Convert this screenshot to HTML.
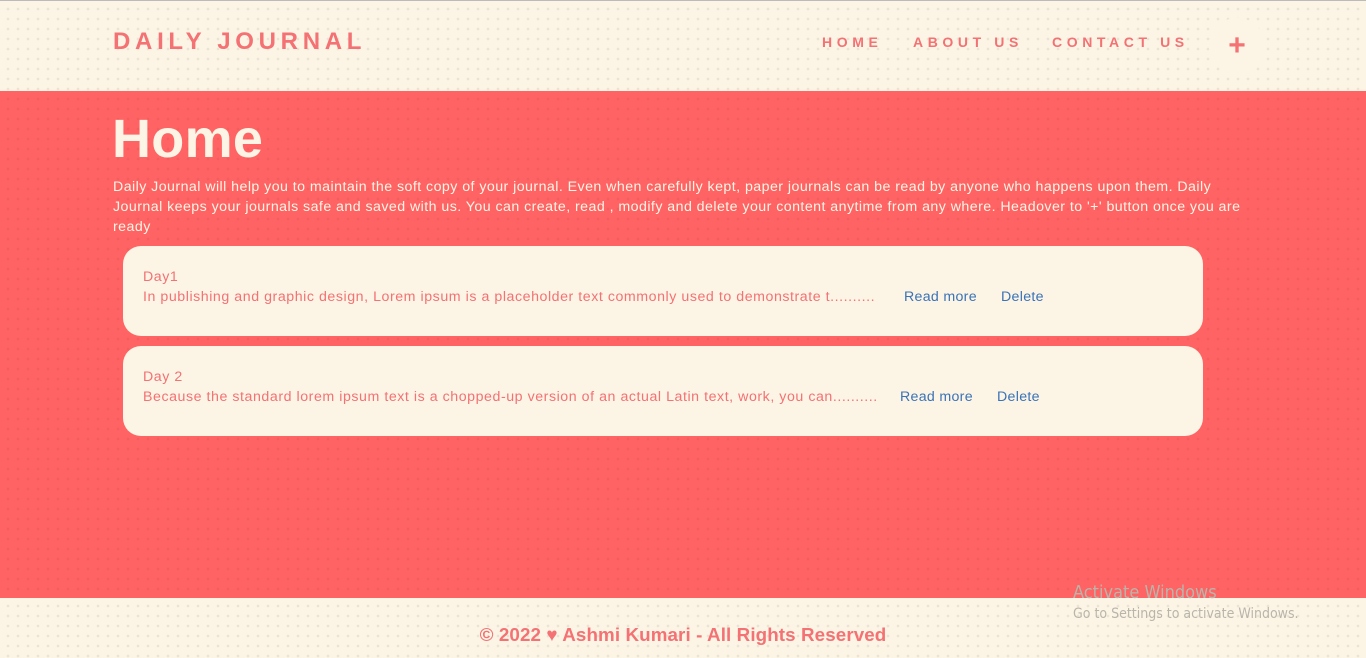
<!DOCTYPE html>
<html><head><meta charset="utf-8"><style>
*{margin:0;padding:0;box-sizing:border-box}
body{width:1366px;height:658px;overflow:hidden;font-family:"Liberation Sans",sans-serif;background:#fcf5e5;position:relative}
.dots{background-image:radial-gradient(circle,rgba(0,0,0,0.07) 1.1px,transparent 1.6px);background-size:10px 10px;background-position:3px 3px}
.top{position:absolute;top:0;left:0;width:1366px;height:91px;background-color:#fcf5e5;border-top:1px solid #bbb}
.logo{position:absolute;left:113px;top:27px;font-size:24px;font-weight:bold;letter-spacing:4.7px;color:#f47174}
.nav{position:absolute;top:33px;font-size:14px;font-weight:bold;letter-spacing:4.6px;color:#f47174}
.plus{position:absolute;left:1209px;top:17px;width:56px;height:56px;border-radius:50%;background:#fcf5e5;color:#f47174;font-size:30px;font-weight:bold;text-align:center;line-height:56px}
.main{position:absolute;top:91px;left:0;width:1366px;height:507px;background-color:#ff6363}
.main .dots2{position:absolute;inset:0;background-image:radial-gradient(circle,rgba(0,0,0,0.05) 1.1px,transparent 1.6px);background-size:10px 10px;background-position:3px 3px}
h1{position:absolute;left:112px;top:17px;font-size:54px;font-weight:bold;color:#fcf5e5;letter-spacing:0.3px}
.desc{position:absolute;left:113px;top:86px;width:1140px;font-size:14.2px;line-height:20px;color:#fcf5e5;letter-spacing:0.45px}
.card{position:absolute;left:123px;width:1080px;height:90px;background:#fcf5e5;border-radius:18px;color:#f47174;font-size:14.2px;padding:21px 20px;line-height:20px;letter-spacing:0.55px}
.card a{color:#3a72b8;text-decoration:none;position:absolute;top:41px;letter-spacing:0.3px}
.foot{position:absolute;top:598px;left:0;width:1366px;height:60px}
.ft{position:absolute;left:0;width:1366px;top:26px;text-align:center;font-size:18.8px;font-weight:bold;color:#f47174;letter-spacing:0.1px}
.win{position:absolute;left:1073px;color:#b9b5ab;font-family:"DejaVu Sans Condensed","Liberation Sans Narrow",sans-serif}
</style></head><body>
<div class="top dots">
<div class="logo">DAILY JOURNAL</div>
<div class="nav" style="left:822px">HOME</div>
<div class="nav" style="left:913px">ABOUT US</div>
<div class="nav" style="left:1052px">CONTACT US</div>
<div class="plus">+</div>
</div>
<div class="main"><div class="dots2"></div>
<h1>Home</h1>
<div class="desc">Daily Journal will help you to maintain the soft copy of your journal. Even when carefully kept, paper journals can be read by anyone who happens upon them. Daily Journal keeps your journals safe and saved with us. You can create, read , modify and delete your content anytime from any where. Headover to '+' button once you are ready</div>
<div class="card" style="top:155px">Day1<br>In publishing and graphic design, Lorem ipsum is a placeholder text commonly used to demonstrate t..........
<a style="left:781px">Read more</a><a style="left:878px">Delete</a></div>
<div class="card" style="top:255px">Day 2<br>Because the standard lorem ipsum text is a chopped-up version of an actual Latin text, work, you can..........
<a style="left:777px">Read more</a><a style="left:874px">Delete</a></div>
</div>
<div class="foot dots"><div class="ft">© 2022 ♥ Ashmi Kumari - All Rights Reserved</div></div>
<div class="win" style="top:582px;font-size:18px">Activate Windows</div>
<div class="win" style="top:606px;font-size:14px">Go to Settings to activate Windows.</div>
</body></html>
